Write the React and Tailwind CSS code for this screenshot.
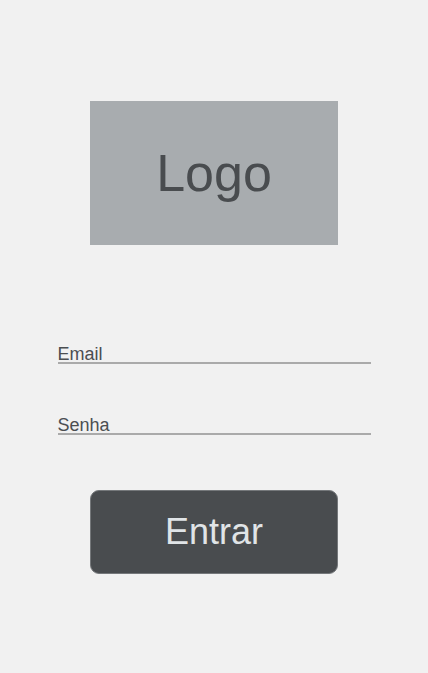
import React from "react";

// Campo de texto simples com sublinhado
const Field = ({ label }) => (
    <div className="w-[313px] border-b-2 border-[#aaaaaa] text-[18px] leading-[16px] text-[#4b4e51]">
        {label}
    </div>
);

export default function App() {
    return (
        <div className="min-h-[673px] w-full bg-[#f1f1f1] flex flex-col items-center pt-[101px]" style={{ fontFamily: '"Liberation Sans", Arial, sans-serif' }}>
            {/* Logo */}
            <div className="w-[248px] h-[144px] bg-[#a8acaf] flex items-center justify-center text-[52px] text-[#494c4f]">
                Logo
            </div>

            {/* Formulário */}
            <div className="mt-[101px] flex flex-col gap-[53px]">
                <Field label="Email" />
                <Field label="Senha" />
            </div>

            <button className="mt-[55px] w-[248px] h-[84px] rounded-[9px] bg-[#494c4f] border border-[#75787b] text-[36px] text-[#e0e4e7]">
                Entrar
            </button>
        </div>
    );
}
